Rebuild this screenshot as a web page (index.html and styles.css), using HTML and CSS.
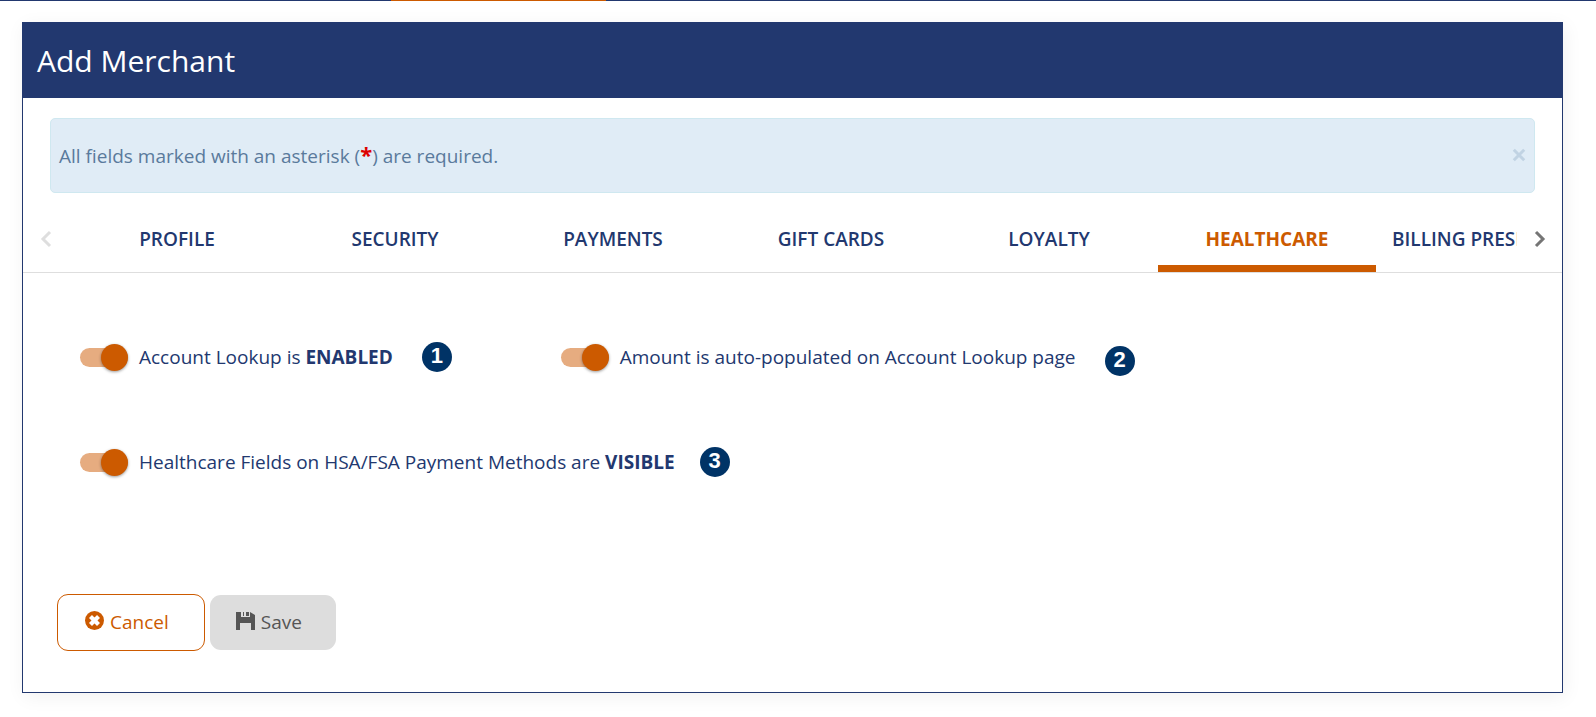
FILE: index.html
```html
<!DOCTYPE html>
<html lang="en">
<head>
    <meta charset="UTF-8">
    <meta name="viewport" content="width=device-width, initial-scale=1.0">
    <title>Add Merchant</title>
    <link rel="stylesheet" href="styles.css">
</head>
<body>
    <div class="top-line">
        <div class="top-line-active"></div>
    </div>

    <div class="panel">
        <h1 class="panel-title">Add Merchant</h1>

        <div class="alert">
            <p>All fields marked with an asterisk (<span class="required">*</span>) are required.</p>
            <button class="alert-close" type="button" aria-label="Close">
                <svg width="14" height="14" viewBox="0 0 14 14"><path d="M1.8 1.8l10.4 10.4M12.2 1.8l-10.4 10.4"/></svg>
            </button>
        </div>

        <div class="tabs">
            <button class="tab-arrow" type="button" aria-label="Previous tabs" disabled>
                <svg width="12" height="18" viewBox="0 0 12 18"><path d="M10 2L3 9l7 7"/></svg>
            </button>
            <div class="tab-list" role="tablist">
                <button class="tab" type="button" role="tab">PROFILE</button>
                <button class="tab" type="button" role="tab">SECURITY</button>
                <button class="tab" type="button" role="tab">PAYMENTS</button>
                <button class="tab" type="button" role="tab">GIFT CARDS</button>
                <button class="tab" type="button" role="tab">LOYALTY</button>
                <button class="tab active" type="button" role="tab" aria-selected="true">HEALTHCARE</button>
                <button class="tab" type="button" role="tab">BILLING PRESENTMENT</button>
            </div>
            <button class="tab-arrow" type="button" aria-label="Next tabs">
                <svg width="12" height="18" viewBox="0 0 12 18"><path d="M2 2l7 7-7 7"/></svg>
            </button>
        </div>

        <form class="settings">
            <div class="fields">
                <div class="field">
                    <input class="switch" type="checkbox" id="lookup" checked>
                    <label for="lookup">Account Lookup is <b>ENABLED</b></label>
                    <span class="badge">1</span>
                </div>
                <div class="field wide">
                    <input class="switch" type="checkbox" id="amount" checked>
                    <label for="amount">Amount is auto-populated on Account Lookup page</label>
                    <span class="badge badge-low">2</span>
                </div>
                <div class="field wide">
                    <input class="switch" type="checkbox" id="hsa" checked>
                    <label for="hsa">Healthcare Fields on HSA/FSA Payment Methods are <b>VISIBLE</b></label>
                    <span class="badge badge-near">3</span>
                </div>
            </div>

            <div class="actions">
                <button class="btn btn-cancel" type="button">
                    <svg width="19" height="19" viewBox="0 0 18 18"><circle cx="9" cy="9" r="9"/><path class="cross" d="M5.2 5.2l7.6 7.6M12.8 5.2l-7.6 7.6"/></svg>
                    Cancel
                </button>
                <button class="btn btn-save" type="submit" disabled>
                    <svg width="19" height="18" viewBox="0 0 19 18"><path d="M0 0h5v5h9V0l5 3v15h-4v-7H4v7H0zM7 0h1v4H7zM10 0h3v4h-3z"/></svg>
                    Save
                </button>
            </div>
        </form>
    </div>
</body>
</html>
```

FILE: styles.css
```css
* {
    box-sizing: border-box;
}
body {
    margin: 0;
    font-family: "Open Sans", Arial, sans-serif;
    font-size: 19px;
    line-height: 27px;
    color: #22386f;
    background: white;
}
button {
    font: inherit;
    color: inherit;
    background: none;
    border: none;
    padding: 0;
    cursor: pointer;
}
svg {
    display: block;
}
.top-line {
    height: 1px;
    padding-left: 391px;
    background: #22386f;
}
.top-line-active {
    width: 215px;
    height: 1px;
    background: #cc5a00;
}
.panel {
    margin: 21px 33px 24px 22px;
    border: 1px solid #22386f;
    box-shadow: 2px 4px 18px rgba(0, 0, 0, 0.06);
}
.panel-title {
    margin: 0;
    padding: 18px 14px 17px;
    font-size: 30px;
    line-height: 40px;
    font-weight: 400;
    color: white;
    background: #22386f;
}
.alert {
    display: flex;
    justify-content: space-between;
    align-items: center;
    margin: 20px 27px 0;
    padding: 24px 8px 22px 8px;
    border: 1px solid #cfe8f0;
    border-radius: 5px;
    color: #5a7a9c;
    background: #e0ecf6;
}
.alert p {
    margin: 0;
}
.required {
    font-size: 22px;
    line-height: 20px;
    font-weight: 700;
    color: #dd0000;
}
.alert-close {
    padding-bottom: 4px;
}
.alert-close svg {
    fill: none;
    stroke: #c1d3e3;
    stroke-width: 3;
}

/* tabs */
.tabs {
    display: flex;
    margin-top: 12px;
    border-bottom: 1px solid #dedede;
}
.tab-arrow {
    flex: 0 0 45px;
    display: flex;
    justify-content: center;
    align-items: center;
}
.tab-arrow svg {
    fill: none;
    stroke: #757575;
    stroke-width: 3;
}
.tab-arrow:disabled svg {
    stroke: #dedede;
}
.tab-list {
    flex: 1;
    display: flex;
    overflow: hidden;
}
.tab {
    flex: none;
    min-width: 218px;
    height: 67px;
    padding: 8px 16px 0;
    border-bottom: 7px solid transparent;
    font-weight: 600;
    white-space: nowrap;
}
.tab.active {
    font-weight: 700;
    color: #cc5a00;
    border-color: #cc5a00;
}

/* healthcare settings */
.settings {
    padding: 69px 40px 41px 34px;
}
.fields {
    display: grid;
    grid-template-columns: repeat(3, 1fr);
    row-gap: 75px;
    padding-left: 23px;
}
.field {
    display: flex;
    align-items: center;
    height: 30px;
}
.wide {
    grid-column: span 2;
}
.switch {
    appearance: none;
    display: flex;
    justify-content: flex-end;
    align-items: center;
    width: 48px;
    height: 19px;
    margin: 0 11px 0 0;
    border-radius: 10px;
    background: #e6ac80;
}
.switch::before {
    content: "";
    width: 27px;
    height: 27px;
    flex: none;
    border-radius: 50%;
    background: #cc5a00;
    box-shadow: 0 1px 3px rgba(0, 0, 0, 0.4);
}
.badge {
    width: 30px;
    height: 30px;
    margin-left: 29px;
    border-radius: 50%;
    font-family: "Liberation Sans", Arial, sans-serif;
    font-size: 22px;
    line-height: 28px;
    font-weight: 700;
    text-align: center;
    color: white;
    background: #003366;
}
.badge-low {
    margin-top: 8px;
}
.badge-near {
    margin-left: 25px;
}
.actions {
    display: flex;
    align-items: center;
    gap: 5px;
    margin-top: 117px;
}
.btn {
    display: flex;
    align-items: center;
    gap: 6px;
    height: 55px;
    padding: 0 34px 0 26px;
    border-radius: 11px;
}
.btn svg {
    fill: currentColor;
    margin-bottom: 4px;
}
.btn-cancel {
    height: 57px;
    padding: 0 35px 0 27px;
    border: 1px solid #cc5a00;
    color: #cc5a00;
}
.btn-cancel .cross {
    stroke: white;
    stroke-width: 4;
}
.btn-save {
    color: #555555;
    background: #dddddd;
}
```
